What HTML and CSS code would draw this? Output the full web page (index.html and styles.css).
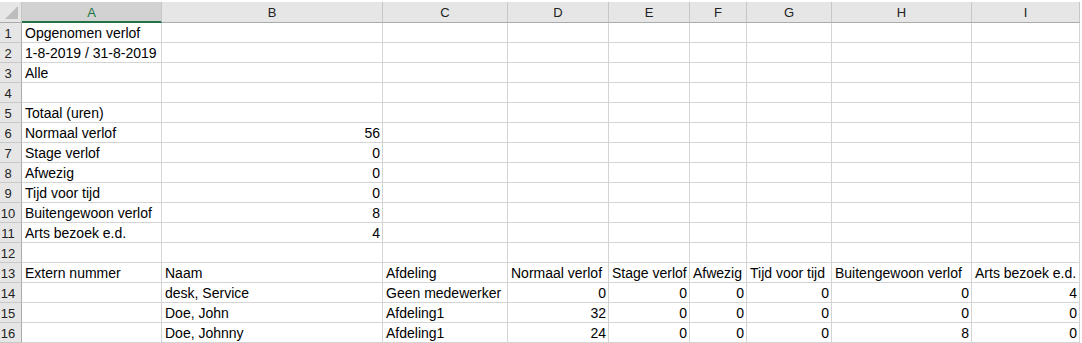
FILE: index.html
```html
<!DOCTYPE html>
<html lang="nl">
<head>
<meta charset="utf-8">
<title>Opgenomen verlof</title>
<link rel="stylesheet" href="styles.css">
</head>
<body>
<div class="sheet">
  <div class="corner"><span class="tri"></span></div>
  <div class="ch sel">A</div><div class="ch">B</div><div class="ch">C</div><div class="ch">D</div><div class="ch">E</div><div class="ch">F</div><div class="ch">G</div><div class="ch">H</div><div class="ch">I</div>

  <div class="rh">1</div><div class="c">Opgenomen verlof</div><div class="c"></div><div class="c"></div><div class="c"></div><div class="c"></div><div class="c"></div><div class="c"></div><div class="c"></div><div class="c"></div>
  <div class="rh">2</div><div class="c">1-8-2019 / 31-8-2019</div><div class="c"></div><div class="c"></div><div class="c"></div><div class="c"></div><div class="c"></div><div class="c"></div><div class="c"></div><div class="c"></div>
  <div class="rh">3</div><div class="c">Alle</div><div class="c"></div><div class="c"></div><div class="c"></div><div class="c"></div><div class="c"></div><div class="c"></div><div class="c"></div><div class="c"></div>
  <div class="rh">4</div><div class="c"></div><div class="c"></div><div class="c"></div><div class="c"></div><div class="c"></div><div class="c"></div><div class="c"></div><div class="c"></div><div class="c"></div>
  <div class="rh">5</div><div class="c">Totaal (uren)</div><div class="c"></div><div class="c"></div><div class="c"></div><div class="c"></div><div class="c"></div><div class="c"></div><div class="c"></div><div class="c"></div>
  <div class="rh">6</div><div class="c">Normaal verlof</div><div class="c n">56</div><div class="c"></div><div class="c"></div><div class="c"></div><div class="c"></div><div class="c"></div><div class="c"></div><div class="c"></div>
  <div class="rh">7</div><div class="c">Stage verlof</div><div class="c n">0</div><div class="c"></div><div class="c"></div><div class="c"></div><div class="c"></div><div class="c"></div><div class="c"></div><div class="c"></div>
  <div class="rh">8</div><div class="c">Afwezig</div><div class="c n">0</div><div class="c"></div><div class="c"></div><div class="c"></div><div class="c"></div><div class="c"></div><div class="c"></div><div class="c"></div>
  <div class="rh">9</div><div class="c">Tijd voor tijd</div><div class="c n">0</div><div class="c"></div><div class="c"></div><div class="c"></div><div class="c"></div><div class="c"></div><div class="c"></div><div class="c"></div>
  <div class="rh">10</div><div class="c">Buitengewoon verlof</div><div class="c n">8</div><div class="c"></div><div class="c"></div><div class="c"></div><div class="c"></div><div class="c"></div><div class="c"></div><div class="c"></div>
  <div class="rh">11</div><div class="c">Arts bezoek e.d.</div><div class="c n">4</div><div class="c"></div><div class="c"></div><div class="c"></div><div class="c"></div><div class="c"></div><div class="c"></div><div class="c"></div>
  <div class="rh">12</div><div class="c"></div><div class="c"></div><div class="c"></div><div class="c"></div><div class="c"></div><div class="c"></div><div class="c"></div><div class="c"></div><div class="c"></div>
  <div class="rh">13</div><div class="c">Extern nummer</div><div class="c">Naam</div><div class="c">Afdeling</div><div class="c">Normaal verlof</div><div class="c">Stage verlof</div><div class="c">Afwezig</div><div class="c">Tijd voor tijd</div><div class="c">Buitengewoon verlof</div><div class="c">Arts bezoek e.d.</div>
  <div class="rh">14</div><div class="c"></div><div class="c">desk, Service</div><div class="c">Geen medewerker</div><div class="c n">0</div><div class="c n">0</div><div class="c n">0</div><div class="c n">0</div><div class="c n">0</div><div class="c n">4</div>
  <div class="rh">15</div><div class="c"></div><div class="c">Doe, John</div><div class="c">Afdeling1</div><div class="c n">32</div><div class="c n">0</div><div class="c n">0</div><div class="c n">0</div><div class="c n">0</div><div class="c n">0</div>
  <div class="rh">16</div><div class="c"></div><div class="c">Doe, Johnny</div><div class="c">Afdeling1</div><div class="c n">24</div><div class="c n">0</div><div class="c n">0</div><div class="c n">0</div><div class="c n">8</div><div class="c n">0</div>
</div>
</body>
</html>
```

FILE: styles.css
```css
html, body {
  margin: 0;
  padding: 0;
  background: #ffffff;
}
body {
  padding-top: 2px;
  font-family: "Liberation Sans", Arial, sans-serif;
  font-size: 14px;
  color: #000;
}
.sheet {
  display: grid;
  grid-template-columns: 22px 140px 221px 125px 101px 81px 57px 85px 140px 108px;
  grid-template-rows: 21px;
  grid-auto-rows: 20px;
  width: 1080px;
}
.sheet > div {
  box-sizing: border-box;
  white-space: nowrap;
}
.corner {
  background: #e6e6e6;
  border-right: 1px solid #c6c6c6;
  border-bottom: 1px solid #ababab;
  display: flex;
  justify-content: flex-end;
  align-items: flex-end;
  padding: 0 3px 3px 0;
}
.tri {
  width: 0;
  height: 0;
  border-left: 13px solid transparent;
  border-bottom: 13px solid #bdbdbd;
}
.ch {
  background: #e6e6e6;
  border-right: 1px solid #c6c6c6;
  border-bottom: 1px solid #ababab;
  font-size: 13px;
  color: #222;
  display: flex;
  align-items: center;
  justify-content: center;
  padding-top: 1px;
}
.ch.sel {
  background: #d2d2d2;
  color: #217346;
  border-bottom: 2px solid #217346;
}
.rh {
  background: #e6e6e6;
  border-right: 1px solid #ababab;
  border-bottom: 1px solid #c8c8c8;
  font-size: 13px;
  color: #222;
  display: flex;
  align-items: center;
  justify-content: center;
  padding: 1px 5px 0 0;
}
.c {
  border-right: 1px solid #d4d4d4;
  border-bottom: 1px solid #d4d4d4;
  padding: 1px 3px 0 3px;
  line-height: 19px;
  overflow: visible;
}
.n {
  text-align: right;
  padding-right: 2px;
}
```
